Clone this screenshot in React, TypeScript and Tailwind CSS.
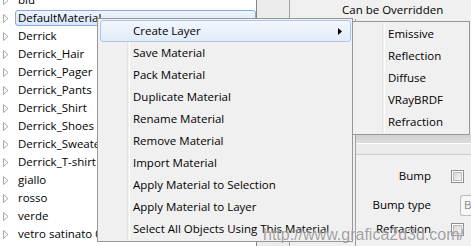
import React from "react";

const treeItems = [
  "blu",
  "DefaultMaterial",
  "Derrick",
  "Derrick_Hair",
  "Derrick_Pager",
  "Derrick_Pants",
  "Derrick_Shirt",
  "Derrick_Shoes",
  "Derrick_Sweater",
  "Derrick_T-shirt",
  "giallo",
  "rosso",
  "verde",
  "vetro satinato 01",
];

const menuItems = [
  "Create Layer",
  "Save Material",
  "Pack Material",
  "Duplicate Material",
  "Rename Material",
  "Remove Material",
  "Import Material",
  "Apply Material to Selection",
  "Apply Material to Layer",
  "Select All Objects Using This Material",
];

const layerItems = ["Emissive", "Reflection", "Diffuse", "VRayBRDF", "Refraction"];

const Expander = () => (
  <svg width="6" height="9" viewBox="0 0 6 9" className="shrink-0">
    <path d="M0.5 0.5 L5 4.5 L0.5 8.5 Z" fill="white" stroke="#a6a6a6" strokeWidth="1" />
  </svg>
);

const Checkbox = () => (
  <div className="w-[13px] h-[13px] border border-[#8e8f8f] bg-white p-[1px]">
    <div className="w-full h-full border border-[#bcbcbc] bg-gradient-to-br from-[#d6d6d6] to-[#f7f7f7]" />
  </div>
);

function Menu({ items, hot, arrow, className }: { items: string[]; hot?: number; arrow?: number; className: string }) {
  return (
    <div className={"absolute border border-[#979797] bg-[#f0f0f0] py-[1px] pl-[2px] pr-[1px] " + className}>
      <div className="absolute left-[29px] top-[1px] bottom-[1px] w-[2px] border-l border-[#e2e3e3] bg-white/0 shadow-[1px_0_0_#ffffff]" />
      {items.map((label, i) => (
        <div
          key={label}
          className={
            "relative h-[22px] flex items-center pl-[32px] whitespace-nowrap " +
            (i === hot
              ? "border border-[#a8c8f0] rounded-[3px] bg-gradient-to-b from-[#f3f7fd] to-[#e1ebf9]"
              : "border border-transparent")
          }
        >
          {label}
          {i === arrow && (
            <svg width="4" height="7" viewBox="0 0 4 7" className="absolute right-[8px] top-[7px]">
              <path d="M0 0 L4 3.5 L0 7 Z" fill="#000" />
            </svg>
          )}
        </div>
      ))}
    </div>
  );
}

export default function App() {
  return (
    <div className="relative w-[471px] h-[246px] overflow-hidden flex bg-[#f0f0f0] text-black text-[11.5px] font-['Open_Sans',sans-serif]">
      {/* material tree */}
      <div className="w-[257px] shrink-0 bg-white border-r border-[#828790] overflow-hidden">
        <div className="-mt-[9px]">
          {treeItems.map((name, i) => (
            <div key={name} className="h-[18px] flex items-center pl-[3px]">
              <Expander />
              {i === 1 ? (
                <div className="ml-[6px] flex-1 h-[16px] flex items-center pl-[2px] border border-[#84acdd] rounded-[3px] bg-gradient-to-b from-[#eef5fd] to-[#d9e7fa]">
                  {name}
                </div>
              ) : (
                <span className="ml-[9px] whitespace-nowrap">{name}</span>
              )}
            </div>
          ))}
        </div>
      </div>

      <div className="w-[33px] shrink-0 border-r border-[#a0a0a0] bg-[#ececec]" />

      {/* properties */}
      <div className="flex-1 flex flex-col">
        <div className="h-[19px] shrink-0 flex items-center pl-[52px] whitespace-nowrap">Can be Overridden</div>
        <div className="flex-1 flex">
          <div className="w-[66px] shrink-0 border-r border-[#a0a0a0]" />
          <div className="flex-1 flex flex-col">
            <div className="h-[116px] shrink-0" />
            <div className="h-[9px] shrink-0 bg-gradient-to-b from-[#d2d2d2] to-[#dcdcdc] border-b border-white" />
            <div className="h-[11px] shrink-0 bg-[#ebebeb] border-b border-[#cdcdcd]" />
            <div className="pt-[10px] flex flex-col">
              <div className="h-[22px] flex items-center">
                <span className="w-[75px] text-right">Bump</span>
                <div className="ml-[20px]"><Checkbox /></div>
              </div>
              <div className="h-[22px] flex items-center mt-[7px]">
                <span className="w-[75px] text-right">Bump type</span>
                <div className="ml-[29px] h-[21px] flex-1 border border-r-0 border-[#bcbcbc] rounded-l-[3px] bg-[#f7f7f7] pl-[3px] flex items-center text-[#8a8a8a]">
                  B
                </div>
              </div>
              <div className="h-[22px] flex items-center mt-[2px]">
                <span className="w-[75px] text-right">Refraction</span>
                <div className="ml-[20px]"><Checkbox /></div>
              </div>
            </div>
          </div>
        </div>
      </div>

      {/* context menu */}
      <Menu items={menuItems} hot={0} arrow={0} className="left-[97px] top-[18px] w-[256px]" />
      <Menu items={layerItems} className="left-[352px] top-[21px] w-[118px]" />

      {/* watermark */}
      <div className="absolute left-[263px] top-[227px] leading-none text-[16px] font-['Liberation_Sans',sans-serif] text-[rgba(110,110,110,0.65)] whitespace-nowrap [text-shadow:0_0_1px_rgba(255,255,255,0.8)]">
        http://www.grafica2d3d.com/
      </div>
    </div>
  );
}
